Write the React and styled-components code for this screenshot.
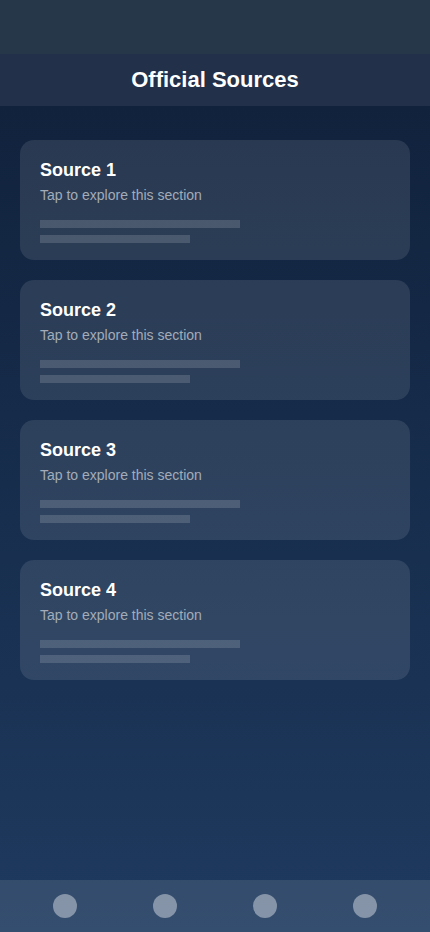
import React from "react";
import styled, { createGlobalStyle } from "styled-components";

const GlobalStyle = createGlobalStyle`
  html, body {
    margin: 0;
    padding: 0;
    background: #0f2039;
  }
  * {
    box-sizing: border-box;
  }
  body {
    font-family: "Liberation Sans", Arial, Helvetica, sans-serif;
  }
`;

const Screen = styled.div`
  display: flex;
  flex-direction: column;
  min-height: 100vh;
  background: linear-gradient(180deg, #0f1f38 0%, #1e3a5f 100%);
  color: #fff;
`;

const StatusBar = styled.div`
  height: 54px;
  background: #27374a;
`;

const Header = styled.header`
  height: 52px;
  display: flex;
  align-items: center;
  justify-content: center;
  background: #223049;

  h1 {
    margin: 0;
    font-size: 22px;
    font-weight: 700;
    color: #fff;
  }
`;

const Content = styled.main`
  flex: 1;
  display: flex;
  flex-direction: column;
  gap: 20px;
  padding: 34px 20px 20px;
`;

const SourceCard = styled.div`
  height: 120px;
  padding: 20px;
  border-radius: 14px;
  background: rgba(255, 255, 255, 0.1);
  cursor: pointer;

  h2 {
    margin: 0;
    font-size: 18px;
    line-height: 20px;
    font-weight: 700;
    color: #fff;
  }

  p {
    margin: 7px 0 0;
    font-size: 14px;
    line-height: 16px;
    color: #a3acb9;
  }
`;

const Lines = styled.div`
  display: flex;
  flex-direction: column;
  gap: 7px;
  margin-top: 17px;
`;

const Line = styled.div`
  width: ${(p) => p.width}px;
  height: 8px;
  background: rgba(255, 255, 255, 0.15);
`;

const NavBar = styled.nav`
  height: 52px;
  display: flex;
  align-items: center;
  justify-content: space-between;
  padding: 0 53px;
  background: rgba(255, 255, 255, 0.1);
`;

const NavDot = styled.button`
  width: 24px;
  height: 24px;
  padding: 0;
  border: none;
  border-radius: 50%;
  background: rgba(255, 255, 255, 0.4);
`;

const sources = [1, 2, 3, 4].map((n) => ({ id: n, title: `Source ${n}` }));

function App() {
  return (
    <>
      <GlobalStyle />
      <Screen>
        <StatusBar />
        <Header>
          <h1>Official Sources</h1>
        </Header>
        <Content>
          {sources.map((source) => (
            <SourceCard key={source.id}>
              <h2>{source.title}</h2>
              <p>Tap to explore this section</p>
              <Lines>
                <Line width={200} />
                <Line width={150} />
              </Lines>
            </SourceCard>
          ))}
        </Content>
        <NavBar>
          {[0, 1, 2, 3].map((i) => (
            <NavDot key={i} aria-label={`tab ${i + 1}`} />
          ))}
        </NavBar>
      </Screen>
    </>
  );
}

export default App;
